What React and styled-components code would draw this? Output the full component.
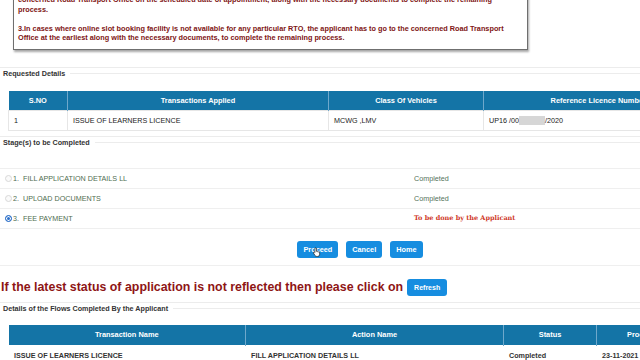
import styled, { createGlobalStyle } from "styled-components";

const GlobalStyle = createGlobalStyle`
  html, body {
    margin: 0;
    padding: 0;
    background: #fff;
    overflow: hidden;
  }
  body {
    font-family: "Liberation Sans", Arial, sans-serif;
    color: #333;
  }
`;

const Page = styled.div`
  width: 720px;
`;

const Notice = styled.div`
  width: 515px;
  box-sizing: border-box;
  margin: -10px 0 17px 13px;
  padding: 4px 4px 6px 4px;
  border: 1px solid #6f6f6f;
  box-shadow: 1px 2px 2px rgba(0, 0, 0, 0.35);
  background: #fff;
`;

const NoticePara = styled.p`
  margin: 0;
  font-size: 7.3px;
  line-height: 9.5px;
  font-weight: bold;
  color: #7e1414;
  white-space: nowrap;
  & + & {
    margin-top: 9.5px;
  }
`;

const Fieldset = styled.section`
  margin-top: ${(p) => p.$top || 0}px;
  border-top: 1px solid #ececec;
`;

const Legend = styled.div`
  display: flex;
  align-items: center;
  gap: 5px;
  height: 12px;
  padding-left: 3px;
  font-size: 7.2px;
  font-weight: bold;
  color: #333;
  white-space: nowrap;
  &::after {
    content: "";
    flex: 1;
    height: 1px;
    background: #ececec;
  }
`;

const Table = styled.table`
  margin: ${(p) => p.$top}px 8px 0 8px;
  width: 704px;
  table-layout: fixed;
  border-collapse: collapse;
`;

const Th = styled.th`
  height: ${(p) => p.$h || 19}px;
  padding: 0 5px;
  background: #1474a6;
  color: #fff;
  font-size: 7.4px;
  font-weight: bold;
  text-align: center;
  white-space: nowrap;
  overflow: hidden;
  border-left: 1px solid #6fa8cb;
  &:first-child {
    border-left: none;
  }
`;

const Td = styled.td`
  height: 19px;
  padding: 0 5px;
  font-size: 7.2px;
  font-weight: ${(p) => (p.$bold ? "bold" : "normal")};
  color: ${(p) => (p.$bold ? "#333" : "#222")};
  white-space: nowrap;
  overflow: hidden;
  border: 1px solid ${(p) => (p.$bold ? "transparent" : "#e6e6e6")};
`;

const Redacted = styled.span`
  display: inline-block;
  width: 26px;
  height: 9px;
  vertical-align: -2px;
  background: #d6d6d6;
`;

const StageList = styled.div`
  margin-top: 19px;
  border-top: 1px solid #efefef;
`;

const StageRow = styled.div`
  display: grid;
  grid-template-columns: 414px 1fr;
  align-items: center;
  height: 19px;
  border-bottom: 1px solid #efefef;
  font-size: 7.2px;
`;

const StageName = styled.div`
  display: flex;
  align-items: center;
  padding-left: 5px;
  color: #4f6d4f;
`;

const Radio = styled.span`
  width: 5px;
  height: 5px;
  border-radius: 50%;
  box-sizing: content-box;
  border: 1px solid ${(p) => (p.$on ? "#2b6fc9" : "#d8d8d8")};
  background: ${(p) => (p.$on ? "#2b6fc9" : "#fafafa")};
  box-shadow: ${(p) => (p.$on ? "inset 0 0 0 1px #fff" : "none")};
  margin-right: 1px;
`;

const StageNo = styled.span`
  width: 10px;
`;

const Status = styled.div`
  color: ${(p) => (p.$pending ? "#cf3a2a" : "#55725a")};
  font-family: ${(p) =>
    p.$pending ? '"DejaVu Serif", "Liberation Serif", serif' : "inherit"};
  font-weight: ${(p) => (p.$pending ? "bold" : "normal")};
  font-size: ${(p) => (p.$pending ? "6.5px" : "7.2px")};
`;

const ButtonBar = styled.div`
  display: flex;
  justify-content: center;
  gap: 8px;
  padding: 12px 0 7px;
  border-bottom: 1px solid #efefef;
`;

const Button = styled.button`
  position: relative;
  height: 17px;
  padding: 0 ${(p) => (p.$small ? 7 : 6)}px;
  border: none;
  border-radius: 3px;
  background: #168de0;
  color: #fff;
  font-family: "Liberation Sans", Arial, sans-serif;
  font-size: ${(p) => (p.$small ? 7 : 7.3)}px;
  font-weight: bold;
  cursor: pointer;
`;

const Cursor = styled.svg`
  position: absolute;
  left: 16px;
  top: 6px;
`;

const RefreshLine = styled.div`
  display: flex;
  align-items: center;
  gap: 4px;
  padding: 13px 0 0 1px;
  height: 17px;
`;

const Alert = styled.span`
  font-size: 12.4px;
  font-weight: bold;
  color: #8e1515;
  white-space: nowrap;
`;

const stages = [
  { no: "1.", name: "FILL APPLICATION DETAILS LL", status: "Completed" },
  { no: "2.", name: "UPLOAD DOCUMENTS", status: "Completed" },
  { no: "3.", name: "FEE PAYMENT", status: "To be done by the Applicant", pending: true },
];

export default function App() {
  return (
    <Page>
      <GlobalStyle />
      <Notice>
        <NoticePara>
          concerned Road Transport Office on the scheduled date of appointment, along with the necessary documents to complete the remaining
          <br />
          process.
        </NoticePara>
        <NoticePara>
          3.In cases where online slot booking facility is not available for any particular RTO, the applicant has to go to the concerned Road Transport
          <br />
          Office at the earliest along with the necessary documents, to complete the remaining process.
        </NoticePara>
      </Notice>

      <Fieldset>
        <Legend>Requested Details</Legend>
        <Table $top={11}>
          <colgroup>
            <col style={{ width: 59 }} />
            <col style={{ width: 261 }} />
            <col style={{ width: 155 }} />
            <col style={{ width: 229 }} />
          </colgroup>
          <thead>
            <tr>
              <Th>S.NO</Th>
              <Th>Transactions Applied</Th>
              <Th>Class Of Vehicles</Th>
              <Th>Reference Licence Number</Th>
            </tr>
          </thead>
          <tbody>
            <tr>
              <Td>1</Td>
              <Td>ISSUE OF LEARNERS LICENCE</Td>
              <Td>MCWG ,LMV</Td>
              <Td>
                UP16 /00<Redacted />/2020
              </Td>
            </tr>
          </tbody>
        </Table>
      </Fieldset>

      <Fieldset $top={5}>
        <Legend>Stage(s) to be Completed</Legend>
        <StageList>
          {stages.map((s) => (
            <StageRow key={s.no}>
              <StageName>
                <Radio $on={s.pending} />
                <StageNo>{s.no}</StageNo>
                {s.name}
              </StageName>
              <Status $pending={s.pending}>{s.status}</Status>
            </StageRow>
          ))}
        </StageList>
      </Fieldset>

      <ButtonBar>
        <Button>
          Proceed
          <Cursor width="8" height="10" viewBox="0 0 18 22">
            <path
              d="M6 1.5c1 0 1.7.7 1.7 1.7v6.3l.3-.1c.9-.3 1.9.1 2.3.9.9-.3 1.9.1 2.3 1 .9-.3 2 .2 2.3 1.1.1.3.1.6.1.9V16c0 2.8-2.2 5-5 5H8.5c-1.7 0-3.2-.9-4.1-2.3L1.2 13.6c-.5-.8-.3-1.9.5-2.4.8-.5 1.8-.3 2.3.4l.3.5V3.2C4.3 2.2 5 1.5 6 1.5z"
              fill="#fff"
              stroke="#000"
              strokeWidth="1.4"
            />
          </Cursor>
        </Button>
        <Button>Cancel</Button>
        <Button>Home</Button>
      </ButtonBar>

      <RefreshLine>
        <Alert>If the latest status of application is not reflected then please click on</Alert>
        <Button $small>Refresh</Button>
      </RefreshLine>

      <Fieldset $top={6}>
        <Legend>Details of the Flows Completed By the Applicant</Legend>
        <Table $top={10}>
          <colgroup>
            <col style={{ width: 237 }} />
            <col style={{ width: 258 }} />
            <col style={{ width: 93 }} />
            <col style={{ width: 116 }} />
          </colgroup>
          <thead>
            <tr>
              <Th $h={20}>Transaction Name</Th>
              <Th $h={20}>Action Name</Th>
              <Th $h={20}>Status</Th>
              <Th $h={20}>Processed Date</Th>
            </tr>
          </thead>
          <tbody>
            <tr>
              <Td $bold>ISSUE OF LEARNERS LICENCE</Td>
              <Td $bold>FILL APPLICATION DETAILS LL</Td>
              <Td $bold>Completed</Td>
              <Td $bold>23-11-2021</Td>
            </tr>
          </tbody>
        </Table>
      </Fieldset>
    </Page>
  );
}
